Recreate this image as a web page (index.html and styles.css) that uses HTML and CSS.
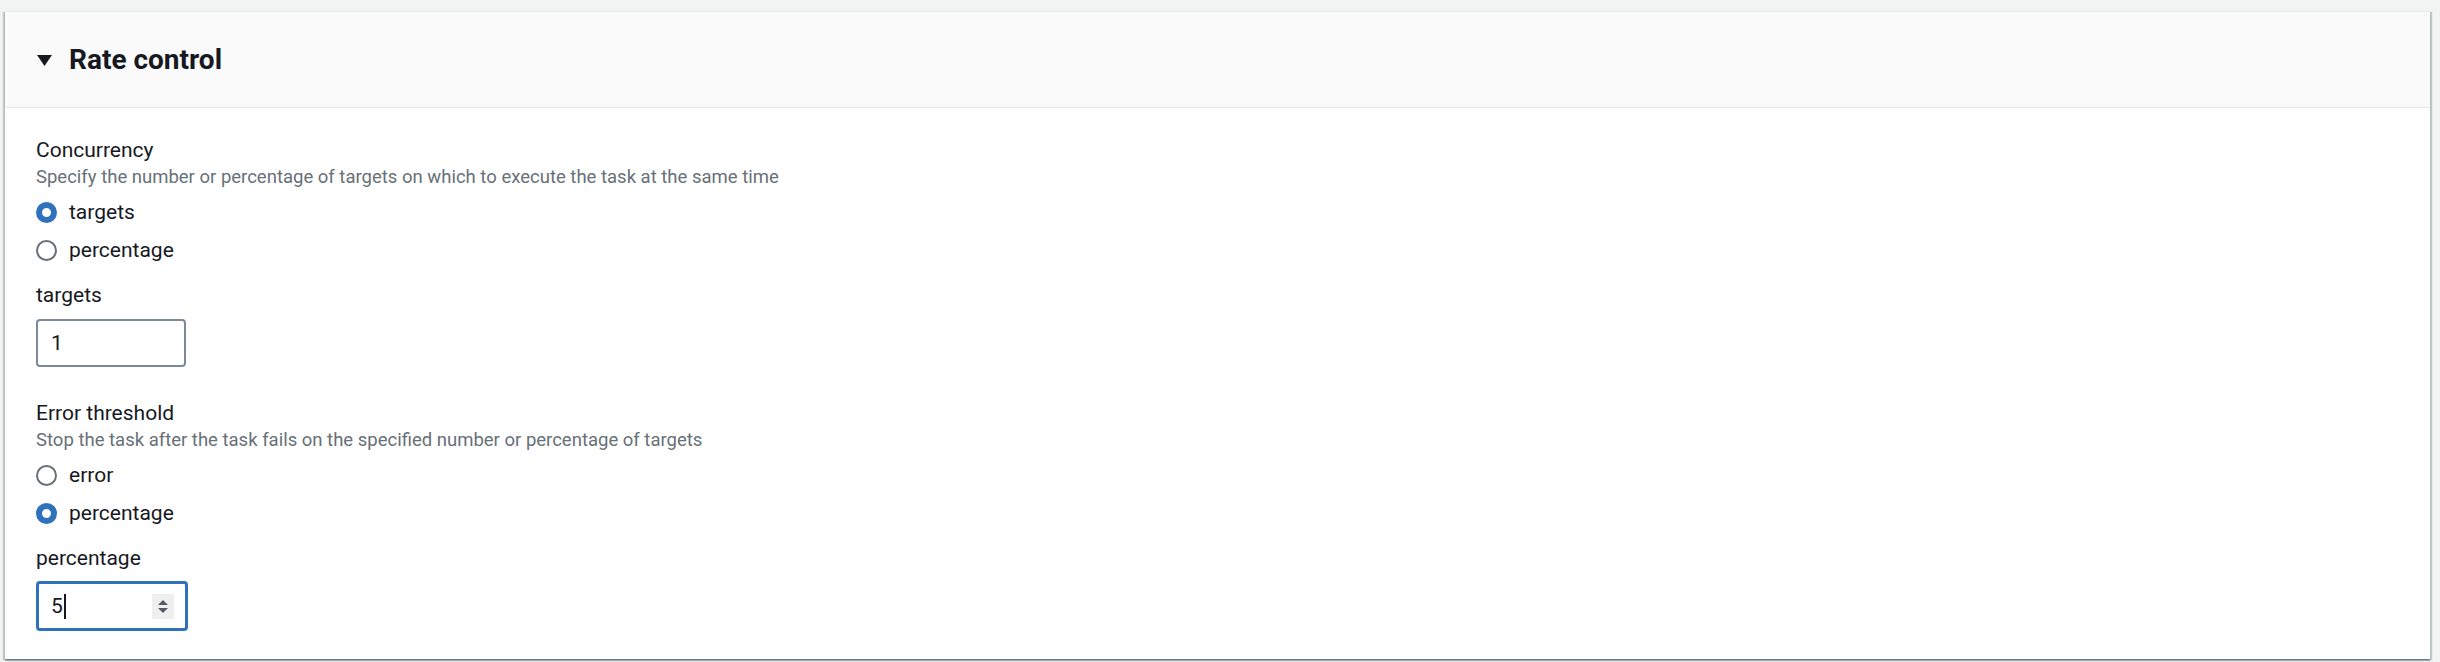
FILE: index.html
```html
<!DOCTYPE html>
<html>
<head>
<meta charset="utf-8">
<link rel="stylesheet" href="styles.css">
</head>
<body>
<div class="page">
  <section class="card">
    <header class="card-header">
      <svg class="caret" width="15" height="11" viewBox="0 0 15 11"><polygon points="0,0 15,0 7.5,11" fill="#16191f"/></svg>
      <h2 class="title">Rate control</h2>
    </header>
    <div class="card-body">
      <div class="field">
        <div class="label">Concurrency</div>
        <div class="desc">Specify the number or percentage of targets on which to execute the task at the same time</div>
        <div class="radios">
          <div class="radio-row"><span class="radio checked"></span><span class="radio-text">targets</span></div>
          <div class="radio-row"><span class="radio"></span><span class="radio-text">percentage</span></div>
        </div>
      </div>
      <div class="field sub">
        <div class="label">targets</div>
        <div class="input"><span class="value">1</span></div>
      </div>
      <div class="field group">
        <div class="label">Error threshold</div>
        <div class="desc">Stop the task after the task fails on the specified number or percentage of targets</div>
        <div class="radios">
          <div class="radio-row"><span class="radio"></span><span class="radio-text">error</span></div>
          <div class="radio-row"><span class="radio checked"></span><span class="radio-text">percentage</span></div>
        </div>
      </div>
      <div class="field sub">
        <div class="label">percentage</div>
        <div class="input focused"><span class="value">5</span><span class="cursor"></span><span class="spinner"><svg width="22" height="25" viewBox="0 0 22 25"><polygon points="11,6 16,11 6,11" fill="#545b64"/><polygon points="6,14 16,14 11,19" fill="#545b64"/></svg></span></div>
      </div>
    </div>
  </section>
</div>
</body>
</html>
```

FILE: styles.css
```css
html, body {
  margin: 0;
  padding: 0;
  background: #f2f3f3;
}
body {
  font-family: Roboto, "Open Sans", Arial, sans-serif;
  color: #16191f;
  width: 2440px;
  height: 662px;
  overflow: hidden;
}
.page {
  padding: 11px 10px 0 5px;
}
.card {
  background: #ffffff;
  border-top: 1px solid #eaeded;
  box-shadow: 0 2px 1px 0 rgba(0, 28, 36, 0.3), 2px 1px 1px 0 rgba(0, 28, 36, 0.2), -2px 1px 1px 0 rgba(0, 28, 36, 0.2);
  height: 648px;
  box-sizing: border-box;
}
.card-header {
  display: flex;
  align-items: center;
  gap: 17px;
  height: 95px;
  padding-left: 32px;
  background: #fafafa;
  border-bottom: 1px solid #e4e7e8;
}
.caret {
  display: block;
  margin-top: 2px;
}
.title {
  margin: 0;
  font-size: 28px;
  font-weight: 700;
  line-height: 36px;
  color: #16191f;
}
.card-body {
  padding: 27px 31px 0 31px;
  display: flex;
  flex-direction: column;
}
.label {
  font-size: 21px;
  line-height: 30px;
  color: #16191f;
}
.desc {
  font-size: 18.5px;
  line-height: 24px;
  color: #687078;
}
.radios {
  display: flex;
  flex-direction: column;
  gap: 8px;
  margin-top: 8px;
}
.radio-row {
  display: flex;
  align-items: center;
  gap: 12px;
  height: 30px;
}
.radio {
  width: 21px;
  height: 21px;
  box-sizing: border-box;
  border-radius: 50%;
  border: 2px solid #687078;
  background: #fff;
  flex: none;
}
.radio.checked {
  border: 6px solid #2f71bb;
}
.radio-text {
  font-size: 21px;
  line-height: 30px;
}
.field.sub {
  margin-top: 15px;
}
.field.group {
  margin-top: 31px;
}
.input {
  margin-top: 9px;
  width: 150px;
  height: 48px;
  box-sizing: border-box;
  border: 2px solid #7d8998;
  border-radius: 4px;
  display: flex;
  align-items: center;
  padding-left: 13px;
  position: relative;
  background: #fff;
}
.input.focused {
  border-color: #2f71bb;
  height: 50px;
  margin-top: 8px;
  border-width: 3px;
  width: 152px;
  padding-left: 12px;
}
.value {
  font-size: 21px;
  color: #16191f;
}
.cursor {
  width: 2px;
  height: 25px;
  background: #16191f;
  margin-left: 1px;
}
.spinner {
  margin-left: auto;
  margin-right: 11px;
  width: 22px;
  height: 25px;
  background: #efefef;
  display: flex;
}
```
